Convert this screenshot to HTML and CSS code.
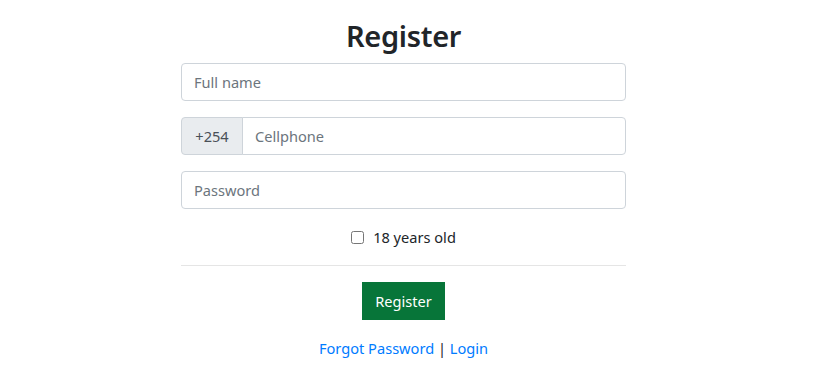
FILE: index.html
```html
<!DOCTYPE html>
<html lang="en">
<head>
<meta charset="utf-8">
<title>Register</title>
<link rel="stylesheet" href="styles.css">
</head>
<body>
<main class="page">
  <form class="register">
    <h2 class="title">Register</h2>
    <input class="field" type="text" placeholder="Full name">
    <div class="group">
      <span class="prefix">+254</span>
      <input class="field field-grouped" type="text" placeholder="Cellphone">
    </div>
    <input class="field" type="password" placeholder="Password">
    <div class="check">
      <input class="check-box" type="checkbox" id="age">
      <label class="check-label" for="age">18 years old</label>
    </div>
    <hr class="rule">
    <div class="actions">
      <button class="btn" type="button">Register</button>
    </div>
    <p class="links"><a href="#">Forgot Password</a> | <a href="#">Login</a></p>
  </form>
</main>
</body>
</html>
```
FILE: styles.css
```css
* { box-sizing: border-box; }
html, body { margin: 0; padding: 0; background: #fff; }
body {
  font-family: "Noto Sans", "Open Sans", sans-serif;
  font-size: 14.6px;
  line-height: 24px;
  color: #212529;
}
.page {
  padding-right: 11px;
}
.register {
  width: 445px;
  margin: 0 auto;
  display: flex;
  flex-direction: column;
}
.title {
  margin: 17px 0 8px;
  font-size: 29px;
  line-height: 38px;
  font-weight: 600;
  letter-spacing: -0.3px;
  text-align: center;
}
.field {
  display: block;
  width: 100%;
  height: 38px;
  margin: 0 0 16px;
  padding: 6px 12px;
  font: inherit;
  color: #495057;
  background: #fff;
  border: 1px solid #ced4da;
  border-radius: 4px;
  outline: none;
}
.field::placeholder { color: #6c757d; opacity: 1; }
.group {
  display: flex;
  margin-bottom: 16px;
}
.prefix {
  display: flex;
  align-items: center;
  justify-content: center;
  width: 62px;
  height: 38px;
  padding: 6px 0;
  color: #495057;
  background: #e9ecef;
  border: 1px solid #ced4da;
  border-radius: 4px 0 0 4px;
}
.field-grouped {
  flex: 1;
  margin: 0;
  margin-left: -1px;
  border-radius: 0 4px 4px 0;
}
.check {
  display: flex;
  justify-content: center;
  align-items: center;
  height: 24px;
}
.check-box {
  width: 13px;
  height: 13px;
  margin: 0 9px 0 0;
}
.rule {
  width: 100%;
  margin: 16px 0;
  border: 0;
  border-top: 1px solid rgba(0,0,0,.1);
}
.actions {
  display: flex;
  justify-content: center;
}
.btn {
  height: 38px;
  padding: 6px 12px;
  font: inherit;
  color: #fff;
  background: #077539;
  border: 1px solid #077539;
  border-radius: 0;
}
.links {
  margin: 16px 0 0;
  text-align: center;
}
.links a {
  color: #007bff;
  text-decoration: none;
}
```
